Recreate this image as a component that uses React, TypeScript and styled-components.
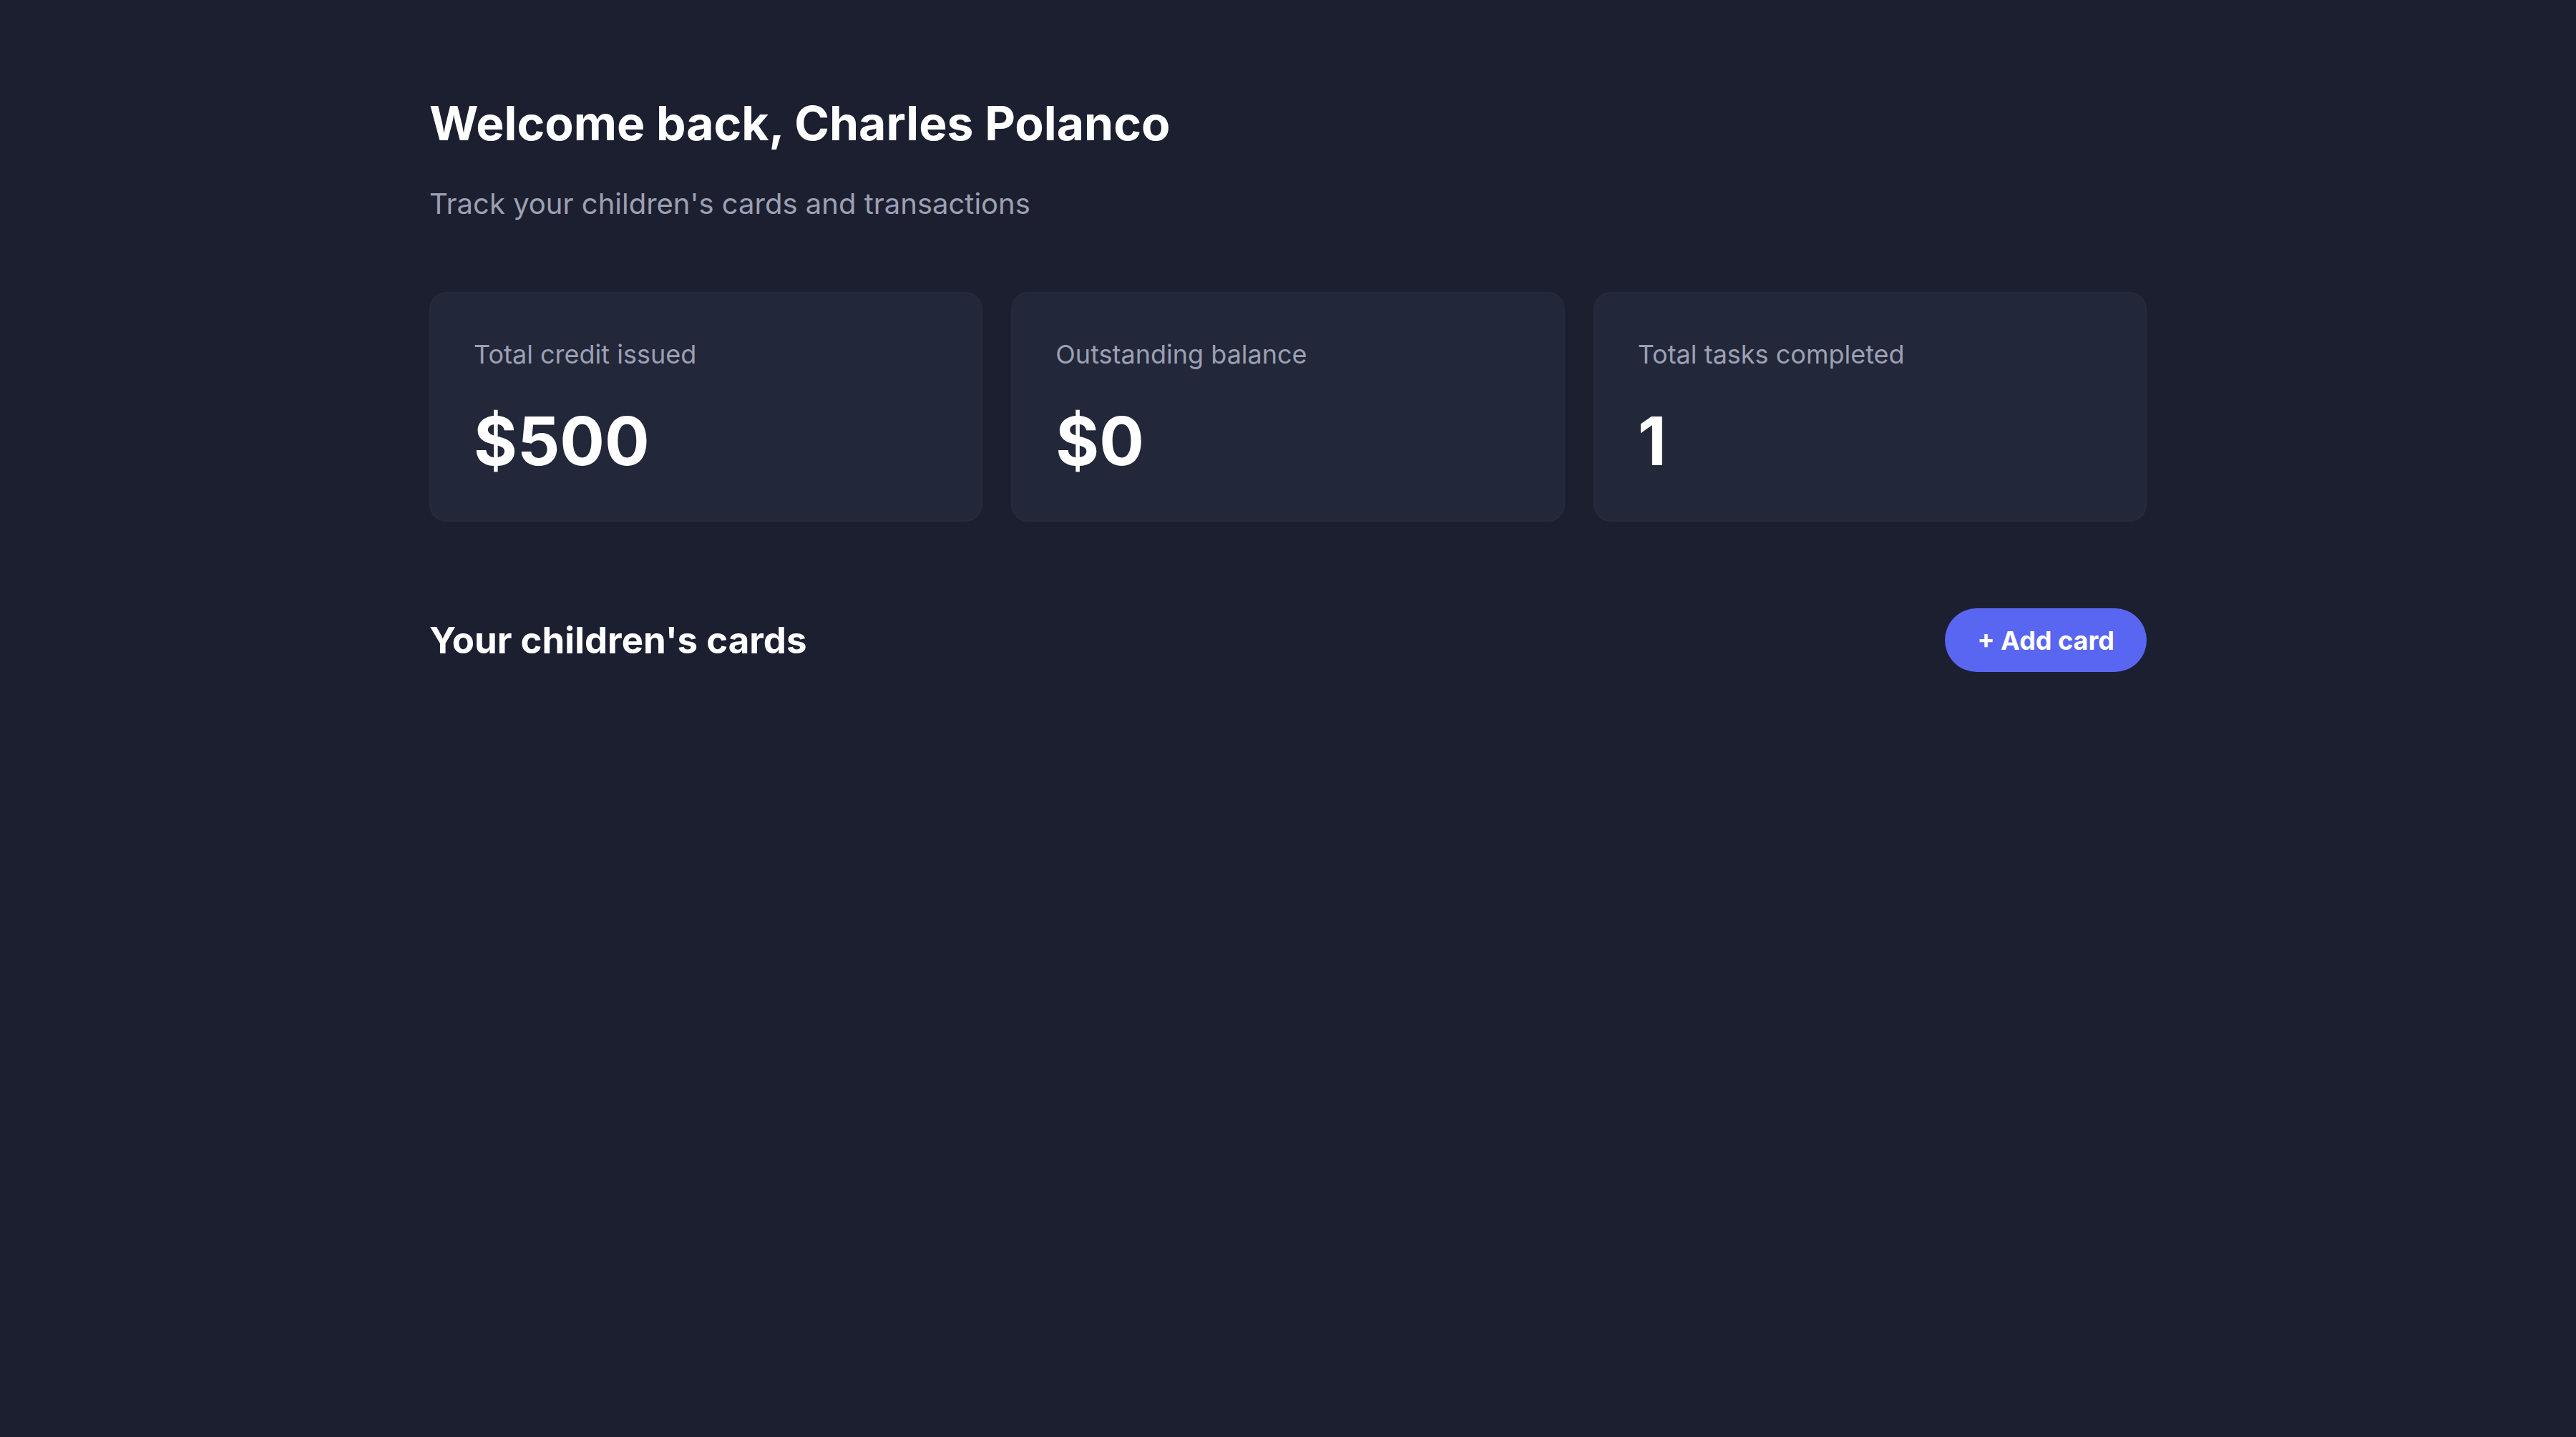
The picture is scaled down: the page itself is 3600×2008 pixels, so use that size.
import styled, { createGlobalStyle } from "styled-components";

const stats = [
  { label: "Total credit issued", value: "$500" },
  { label: "Outstanding balance", value: "$0" },
  { label: "Total tasks completed", value: "1" },
];

function App() {
  return (
    <>
      <GlobalStyle />
      <Page>
        <Container>
          <Header>
            <Title>Welcome back, Charles Polanco</Title>
            <Subtitle>Track your children's cards and transactions</Subtitle>
          </Header>

          <StatsGrid>
            {stats.map((stat) => (
              <StatCard key={stat.label}>
                <StatLabel>{stat.label}</StatLabel>
                <StatValue>{stat.value}</StatValue>
              </StatCard>
            ))}
          </StatsGrid>

          <SectionHeader>
            <SectionTitle>Your children's cards</SectionTitle>
            <AddButton>+ Add card</AddButton>
          </SectionHeader>
        </Container>
      </Page>
    </>
  );
}

const GlobalStyle = createGlobalStyle`
  html, body {
    margin: 0;
    padding: 0;
    background: #1c1f30;
  }

  body {
    font-family: Inter, "Noto Sans", "Liberation Sans", sans-serif;
    -webkit-font-smoothing: antialiased;
  }

  * {
    box-sizing: border-box;
  }
`;

const Page = styled.div`
  min-height: 100vh;
  background: #1c1f30;
`;

const Container = styled.main`
  max-width: 2400px;
  margin: 0 auto;
  padding-top: 133px;
  display: flex;
  flex-direction: column;
`;

const Header = styled.header`
  display: flex;
  flex-direction: column;
  gap: 43px;
  margin-bottom: 93px;
`;

const Title = styled.h1`
  margin: 0;
  font-size: 66px;
  line-height: 79px;
  font-weight: 700;
  color: #ffffff;
`;

const Subtitle = styled.p`
  margin: 0;
  font-size: 40px;
  line-height: 60px;
  font-weight: 400;
  color: #9ca0b3;
`;

const StatsGrid = styled.section`
  display: grid;
  grid-template-columns: repeat(3, 1fr);
  gap: 40px;
  margin-bottom: 121px;
`;

const StatCard = styled.div`
  height: 321px;
  padding: 58px 60px 55px;
  border-radius: 24px;
  background: #222739;
  border: 2px solid rgba(255, 255, 255, 0.02);
  display: flex;
  flex-direction: column;
  gap: 36px;
`;

const StatLabel = styled.span`
  font-size: 36px;
  line-height: 54px;
  font-weight: 400;
  color: #9ca0b3;
`;

const StatValue = styled.span`
  font-size: 93px;
  line-height: 116px;
  font-weight: 700;
  color: #ffffff;
`;

const SectionHeader = styled.div`
  display: flex;
  justify-content: space-between;
  align-items: center;
`;

const SectionTitle = styled.h2`
  margin: 0;
  font-size: 51px;
  line-height: 74px;
  font-weight: 700;
  color: #ffffff;
`;

const AddButton = styled.button`
  height: 89px;
  padding: 0 45px;
  border: 0;
  border-radius: 999px;
  background: #5966f1;
  color: #ffffff;
  font-family: inherit;
  font-size: 36px;
  font-weight: 700;
  cursor: pointer;
`;

export default App;
